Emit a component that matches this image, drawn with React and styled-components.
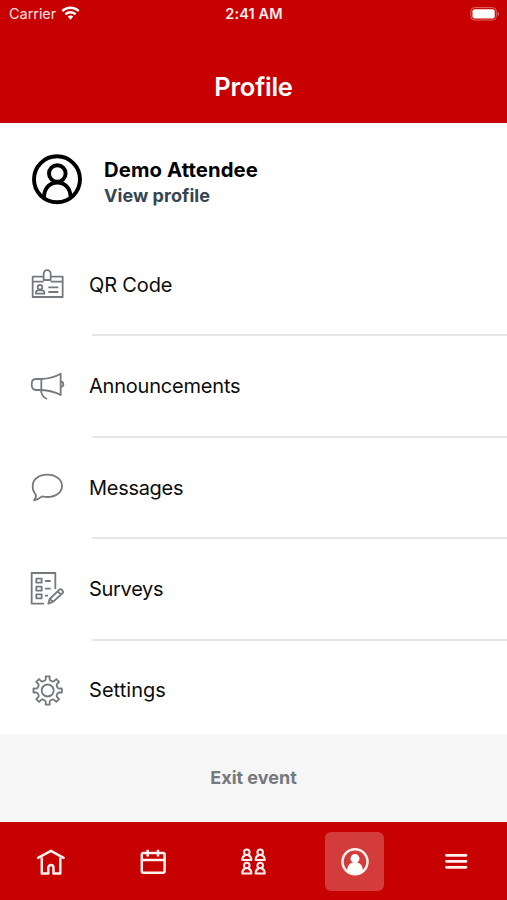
import React from 'react';
import styled, {createGlobalStyle, css} from 'styled-components';

const GlobalStyle = createGlobalStyle`
  * {
    box-sizing: border-box;
  }

  body {
    margin: 0;
    background-color: #fff;
    font-family: Inter, 'Liberation Sans', sans-serif;
  }

  button {
    font-family: inherit;
    border: none;
    margin: 0;
    padding: 0;
    background: none;
  }
`;

const Screen = styled.div`
  display: flex;
  flex-direction: column;
  width: 100%;
  height: 900px;
  overflow: hidden;
  background-color: #fff;
`;

const Header = styled.header`
  height: 123px;
  flex: none;
  color: white;
  background-color: #c70000;
`;

const StatusBar = styled.div`
  display: grid;
  grid-template-columns: 1fr auto 1fr;
  align-items: center;
  height: 27px;
  padding: 0 7px 0 9px;
`;

const Carrier = styled.div`
  display: flex;
  align-items: center;
  gap: 5px;
  font-size: 14.5px;
  letter-spacing: -0.05px;
  color: #ffe3e3;
`;

const Time = styled.div`
  margin-right: 1px;
  font-size: 14.5px;
  font-weight: 600;
  letter-spacing: 0.1px;
  color: #ffecec;
`;

const BatteryIcon = styled.svg`
  justify-self: end;
  width: 30px;
  height: 14px;
`;

const Title = styled.h1`
  margin: 44px 0 0;
  font-size: 25.5px;
  font-weight: 600;
  line-height: 32px;
  text-align: center;
  letter-spacing: -0.25px;
`;

const ProfileCard = styled.section`
  display: flex;
  gap: 21px;
  height: 111px;
  flex: none;
  padding: 31px 31px 0;
`;

const Avatar = styled.svg`
  width: 52px;
  height: 52px;
  fill: none;
  stroke: #000;
  stroke-width: 3.9;
`;

const ProfileName = styled.div`
  margin-top: 3px;
  font-size: 20.3px;
  font-weight: 700;
  line-height: 26px;
  letter-spacing: 0.1px;
  color: #000;
`;

const ProfileLink = styled.div`
  font-size: 18px;
  font-weight: 700;
  line-height: 25px;
  letter-spacing: 0.05px;
  color: #36454f;
`;

const Menu = styled.nav`
  flex: 1;
  overflow: hidden;
`;

const MenuRow = styled.div`
  display: flex;
  align-items: center;
  height: 101.4px;
  padding-left: 30px;
`;

const MenuIcon = styled.svg`
  width: 35px;
  height: 35px;
  flex: none;
  margin-right: 24px;
  fill: none;
  stroke: #74797d;
  stroke-width: 5.4;
  stroke-linejoin: round;
`;

const MenuLabel = styled.span`
  font-size: 20px;
  line-height: 28px;
  color: #0c0c0c;
  letter-spacing: ${props => props.$spacing}px;
`;

const Divider = styled.hr`
  height: 2px;
  margin: -1.1px 0 -0.9px 92px;
  border: none;
  background-color: #e6e6e6;
`;

const ExitButton = styled.button`
  height: 88px;
  flex: none;
  padding-bottom: 2px;
  font-size: 18px;
  font-weight: 700;
  color: #74797c;
  background-color: #f6f6f6;
`;

const TabBar = styled.nav`
  display: grid;
  grid-template-columns: repeat(5, 1fr);
  justify-items: center;
  height: 78px;
  flex: none;
  padding-top: 10px;
  background-color: #c70000;
`;

const Tab = styled.button`
  display: flex;
  align-items: center;
  justify-content: center;
  width: 59px;
  height: 59px;
  border-radius: 6px;

  ${props => props.$active && css`
    background-color: rgba(255, 255, 255, 0.23);
  `}
`;

const TabIcon = styled.svg`
  width: 30px;
  height: 30px;
  fill: none;
  stroke: #fff0f0;
  stroke-width: ${props => props.$stroke || 2.5};
  stroke-linejoin: round;
`;

const WifiIcon = () => (
  <svg width="19" height="15" viewBox="0 0 19 15" fill="white">
    <path d="M9.5 0.6C6 0.6 2.8 1.9 0.5 4.2L2.2 6C4.1 4.1 6.7 3 9.5 3s5.4 1.1 7.3 3l1.7-1.8C16.2 1.9 13 0.6 9.5 0.6Z" />
    <path d="M9.5 5.1c-2.3 0-4.4.9-5.9 2.4l1.7 1.7c1.1-1.1 2.6-1.8 4.2-1.8s3.1.7 4.2 1.8l1.7-1.7C13.9 6 11.8 5.1 9.5 5.1Z" />
    <path d="M9.5 9.5c-1.1 0-2.1.45-2.8 1.1L9.5 13.8l2.8-3.2c-.7-.65-1.7-1.1-2.8-1.1Z" />
  </svg>
);

const Battery = () => (
  <BatteryIcon viewBox="0 0 30 14">
    <rect x="0.9" y="0.6" width="25.4" height="12.4" rx="3.6" fill="none" stroke="#e06a6a" />
    <rect x="2.5" y="2.2" width="22.2" height="9.2" rx="2" fill="white" />
    <path d="M27.7 4.8a2.3 2.3 0 0 1 0 4.2Z" fill="#e06a6a" />
  </BatteryIcon>
);

//Badge with a clip and a small portrait
const BadgeIcon = () => (
  <MenuIcon viewBox="0 0 105 105">
    <path d="M41 29H8V90H98V29H62M8 44H41M62 44H98" />
    <path d="M41 39V20a10.5 10.5 0 0 1 21 0V39Z" />
    <circle cx="30" cy="61" r="7" />
    <path d="M18 80V76Q18 70 25 70H35Q43 70 43 76V80Z" />
    <path d="M55 61H85M55 75H85" />
  </MenuIcon>
);

const MegaphoneIcon = () => (
  <MenuIcon viewBox="0 0 105 105">
    <path d="M34 30H17Q5 30 5 46T17 63H34Z" />
    <path d="M34 30Q68 28 92 14V78Q66 64 34 63" />
    <path d="M92 38Q100 38 100 45.500T92 53" />
    <path d="M33 63Q34 83 51 90" />
  </MenuIcon>
);

const BubbleIcon = () => (
  <MenuIcon viewBox="0 0 105 105">
    <path d="M12 91C18 85 19 79 17 73C10 66 8 57 8 48C8 27 28 14 52 14S96 28 96 48S76 81 52 81C46 81 42 80 36 79C28 86 20 89 12 91Z" />
  </MenuIcon>
);

const SurveyIcon = () => (
  <MenuIcon viewBox="0 0 105 105">
    <path d="M42 98H5V6H76V54" />
    <rect x="19" y="23" width="16" height="12" />
    <rect x="19" y="47" width="16" height="12" />
    <rect x="19" y="70" width="16" height="12" />
    <path d="M45 30H62M45 53H62M45 74H54" />
    <path d="M55 98L59 84L89 55Q92 53 95 56L99 61Q101 63 98 66L70 92ZM59 84L70 92M83 61L93 71" />
  </MenuIcon>
);

const GEAR_TEETH = [0, 45, 90, 135, 180, 225, 270, 315];

//Eight teeth around the hub: root, tip, tip, root for each one
const gearPoints = GEAR_TEETH.flatMap(angle =>
  [[-15, 31], [-10, 34], [-8, 43], [8, 43], [10, 34], [15, 31]].map(([offset, radius]) => {
    const turn = (angle + offset) * Math.PI / 180;
    return `${(53 + radius * Math.sin(turn)).toFixed(1)},${(52.5 - radius * Math.cos(turn)).toFixed(1)}`;
  })
).join(' ');

const GearIcon = () => (
  <MenuIcon viewBox="0 0 105 105">
    <polygon points={gearPoints} />
    <circle cx="53" cy="52.5" r="18" />
  </MenuIcon>
);

const HomeIcon = () => (
  <TabIcon viewBox="0 0 30 30">
    <path d="M5.8 10.5V26.4H12.3V20.7a2.6 2.6 0 0 1 5.2 0V26.4H24.3V10.5" />
    <path d="M2.1 10.8L14.9 3.8L27.6 10.8" strokeLinecap="round" />
  </TabIcon>
);

const CalendarIcon = () => (
  <TabIcon viewBox="0 0 30 30">
    <rect x="4.8" y="6" width="22.8" height="19.7" rx="1.5" />
    <path d="M4.8 13H27.6M10.7 2.8V9.4M21 2.8V9.4" />
  </TabIcon>
);

const PeopleIcon = () => (
  <TabIcon viewBox="0 0 30 30" $stroke={2}>
    {[[8.8, 5.2], [22.2, 5.2], [8.8, 18.5], [22.2, 18.5]].map(([x, y]) => (
      <g key={`${x}-${y}`} transform={`translate(${x} ${y})`}>
        <circle cx="0" cy="0" r="2.8" />
        <path d="M-1.5 3Q-4.6 4 -4.6 7.9H4.6Q4.6 4 1.5 3" />
      </g>
    ))}
  </TabIcon>
);

const PersonIcon = () => (
  <TabIcon viewBox="0 0 30 30">
    <circle cx="15" cy="14.8" r="12.5" />
    <circle cx="15" cy="11.6" r="4.5" fill="white" stroke="none" />
    <path d="M7.2 24Q7.2 16.500 12.700 15.500H17.300Q22.800 16.500 22.800 24Q15 29.500 7.200 24Z" fill="white" stroke="none" />
  </TabIcon>
);

const BurgerIcon = () => (
  <TabIcon viewBox="0 0 30 30" $stroke={2.7}>
    <path d="M5.4 8.3H25.1M5.4 14.3H25.1M5.4 20.3H25.1" strokeLinecap="round" />
  </TabIcon>
);

const menuItems = [
  {label: 'QR Code', Icon: BadgeIcon, spacing: -0.15},
  {label: 'Announcements', Icon: MegaphoneIcon, spacing: -0.2},
  {label: 'Messages', Icon: BubbleIcon, spacing: -0.3},
  {label: 'Surveys', Icon: SurveyIcon, spacing: -0.3},
  {label: 'Settings', Icon: GearIcon, spacing: 0.05}
];

const tabs = [
  {name: 'home', Icon: HomeIcon},
  {name: 'agenda', Icon: CalendarIcon},
  {name: 'people', Icon: PeopleIcon},
  {name: 'profile', Icon: PersonIcon},
  {name: 'more', Icon: BurgerIcon}
];

const ProfileHeader = () => (
  <Header>
    <StatusBar>
      <Carrier>
        Carrier
        <WifiIcon />
      </Carrier>
      <Time>2:41 AM</Time>
      <Battery />
    </StatusBar>
    <Title>Profile</Title>
  </Header>
);

const App = () => {
  return (
    <Screen>
      <GlobalStyle />
      <ProfileHeader />
      <ProfileCard>
        <Avatar viewBox="0 0 52 52">
          <circle cx="26" cy="25.3" r="23" />
          <circle cx="26.3" cy="19.5" r="8.3" />
          <path d="M13 43.5C13 23.4 39.6 23.4 39.6 43.5" />
        </Avatar>
        <div>
          <ProfileName>Demo Attendee</ProfileName>
          <ProfileLink>View profile</ProfileLink>
        </div>
      </ProfileCard>
      <Menu>
        {menuItems.map(({label, Icon, spacing}, index) => (
          <React.Fragment key={label}>
            {index > 0 && <Divider />}
            <MenuRow>
              <Icon />
              <MenuLabel $spacing={spacing}>{label}</MenuLabel>
            </MenuRow>
          </React.Fragment>
        ))}
      </Menu>
      <ExitButton>Exit event</ExitButton>
      <TabBar>
        {tabs.map(({name, Icon}) => (
          <Tab key={name} $active={name === 'profile'}>
            <Icon />
          </Tab>
        ))}
      </TabBar>
    </Screen>
  );
}

export default App;
